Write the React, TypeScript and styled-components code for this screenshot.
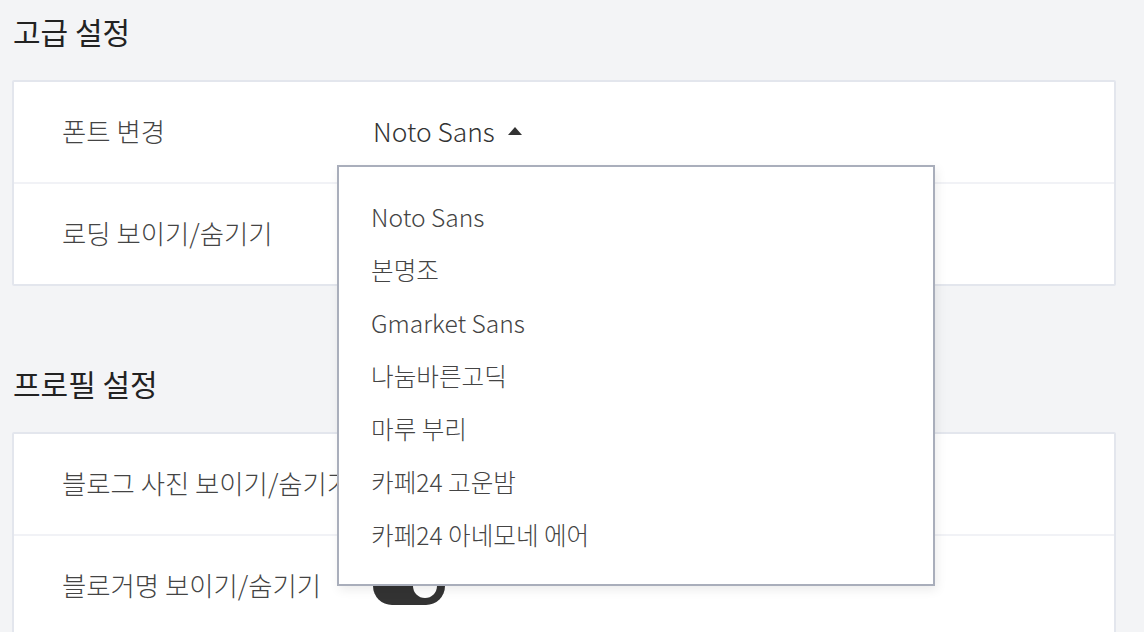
import styled, { createGlobalStyle } from 'styled-components';

const fonts = ['Noto Sans', '본명조', 'Gmarket Sans', '나눔바른고딕', '마루 부리', '카페24 고운밤', '카페24 아네모네 에어'];

const GlobalStyle = createGlobalStyle`
  body {
    margin: 0;
    background: #f3f4f6;
    font-family: 'Noto Sans CJK KR', 'Noto Sans', sans-serif;
    color: #333;
  }
`;

export default function App() {
  return (
    <>
      <GlobalStyle />
      <Page>
        <Section>
          <Heading>고급 설정</Heading>
          <Card>
            <Row>
              <Label>폰트 변경</Label>
              <Select>
                <SelectValue>
                  Noto Sans
                  <Caret />
                </SelectValue>
                <Menu>
                  {fonts.map((f) => (
                    <MenuItem key={f}>{f}</MenuItem>
                  ))}
                </Menu>
              </Select>
            </Row>
            <Row>
              <Label>로딩 보이기/숨기기</Label>
              <Toggle $on />
            </Row>
          </Card>
        </Section>
        <Section>
          <Heading>프로필 설정</Heading>
          <Card>
            <Row>
              <Label>블로그 사진 보이기/숨기기</Label>
              <Toggle $on />
            </Row>
            <Row>
              <Label>블로거명 보이기/숨기기</Label>
              <Toggle $on />
            </Row>
          </Card>
        </Section>
      </Page>
    </>
  );
}

const Page = styled.div`
  padding: 10px 28px 0 12px;
  display: flex;
  flex-direction: column;
  gap: 76px;
`;

const Section = styled.section`
  display: flex;
  flex-direction: column;
`;

const Heading = styled.h2`
  margin: 0 0 27px 1px;
  font-size: 30px;
  line-height: 43px;
  font-weight: 400;
  color: #222;
`;

const Card = styled.div`
  background: #fff;
  border: 2px solid #e3e6ed;
  border-radius: 2px;
`;

const Row = styled.div`
  display: grid;
  grid-template-columns: 311px 1fr;
  align-items: center;
  height: 100px;
  padding-left: 48px;

  & + & {
    border-top: 2px solid #f1f2f6;
  }
`;

const Label = styled.div`
  font-size: 26.4px;
  font-weight: 300;
  line-height: 36px;
  margin-top: -2px;
  color: #444;
  white-space: nowrap;
`;

const Select = styled.div`
  position: relative;
  justify-self: start;
  z-index: 2;
`;

const SelectValue = styled.div`
  display: flex;
  align-items: center;
  font-size: 26.4px;
  font-weight: 300;
  line-height: 36px;
  margin-top: -2px;
  color: #333;
`;

const Caret = styled.span`
  margin-left: 13px;
  width: 0;
  height: 0;
  border-left: 7px solid transparent;
  border-right: 7px solid transparent;
  border-bottom: 8px solid #333;
`;

const Menu = styled.ul`
  position: absolute;
  top: calc(100% + 16px);
  left: -36px;
  width: 594px;
  margin: 0;
  padding: 23px 0;
  list-style: none;
  background: #fff;
  border: 2px solid #a9aebb;
  box-shadow: 2px 4px 10px rgba(0, 0, 0, 0.08);
`;

const MenuItem = styled.li`
  height: 53px;
  display: flex;
  align-items: center;
  padding-left: 32px;
  margin-top: -1px;
  margin-bottom: 1px;
  font-size: 24.6px;
  font-weight: 300;
  color: #444;
`;

const Toggle = styled.span<{ $on?: boolean }>`
  position: relative;
  display: block;
  width: 72px;
  height: 38px;
  border-radius: 19px;
  background: ${(p) => (p.$on ? '#333' : '#ccc')};

  &::after {
    content: '';
    position: absolute;
    top: 7px;
    left: ${(p) => (p.$on ? '40px' : '8px')};
    width: 24px;
    height: 24px;
    border-radius: 50%;
    background: #fff;
  }
`;
